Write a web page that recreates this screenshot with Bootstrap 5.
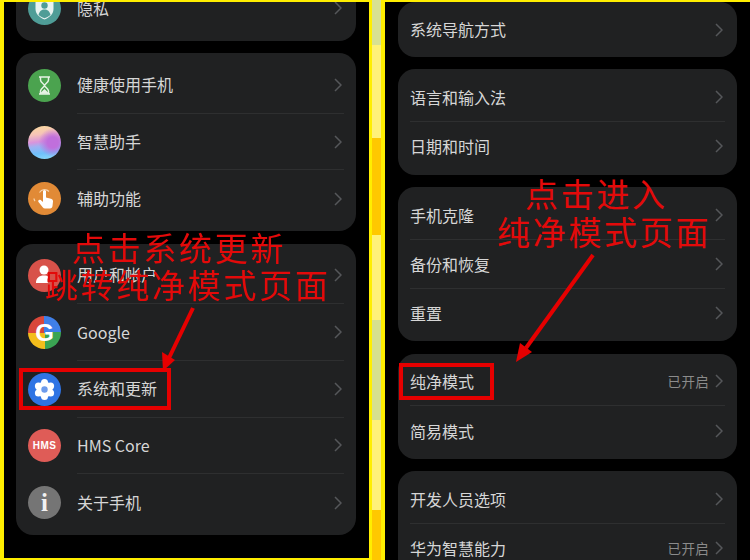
<!DOCTYPE html>
<html lang="zh-CN">
<head>
    <meta charset="UTF-8">
    <title>纯净模式设置步骤</title>
    <link href="https://cdn.jsdelivr.net/npm/bootstrap@5.3.0/dist/css/bootstrap.min.css" rel="stylesheet">
    <style>
        html, body {
            height: 100%;
            margin: 0;
            overflow: hidden;
            background: #ffee00;
        }
        body {
            font-family: "Noto Sans CJK SC", "Noto Sans", sans-serif;
        }
        .shot {
            width: 750px;
            height: 560px;
            padding-top: 2px;
            filter: blur(.5px);
        }
        .phone-pane {
            background: #000;
            overflow: hidden;
            width: 365px;
            flex: none;
        }
        .pane-left {
            margin-left: 4px;
            height: 556px;
            padding: 0 13px 0 12px;
        }
        .pane-right {
            height: 558px;
            padding: 0 13px;
        }
        .stack-left {
            margin-top: -26px;
        }
        .group-stack {
            gap: 12.4px;
        }
        .gutter {
            width: 16px;
            flex: none;
            margin-top: -2px;
            padding: 0 4px 0 3px;
        }
        .gutter-fill {
            height: 100%;
            background: linear-gradient(to bottom,
                #d8e192 0 45px, #fff178 45px 138px,
                #ffc800 138px 235px, #fff178 235px 320px,
                #d6e08e 320px 420px, #fff178 420px 510px,
                #ffc800 510px);
        }
        .settings-group {
            background: #202122;
            border-radius: 17px;
            padding: 4px 0;
        }
        .left-row {
            height: 56.7px;
            padding-left: 12px;
            gap: 16px;
        }
        .right-row {
            height: 48.7px;
            padding-left: 12px;
        }
        .right-row.short-row {
            height: 47px;
        }
        .row-body {
            height: 100%;
            margin-right: 12px;
            padding-right: 2px;
            color: #d6d6d6;
            font-size: 16px;
            line-height: 1;
            border-bottom: 1px solid #2e2f30;
        }
        .last-row .row-body {
            border-bottom: 0;
        }
        .left-row .row-label, .short-row .row-label {
            padding-bottom: 2px;
        }
        .left-row .row-label.plain-label {
            padding-bottom: 0;
        }
        .row-state {
            color: #8b8b8b;
            font-size: 13.5px;
            letter-spacing: .3px;
            margin-right: 6px;
        }
        .row-chevron {
            width: 8px;
            height: 14px;
            flex: none;
        }
        .app-icon {
            width: 33px;
            height: 33px;
            flex: none;
            overflow: hidden;
        }
        .icon-privacy { background: #4f9d97; }
        .icon-health { background: #4ba34f; }
        .icon-assistant {
            background:
                radial-gradient(circle at 75% 50%, #c06fdc 0 18%, transparent 48%),
                linear-gradient(172deg, #fbdc9c 0%, #f5c3b8 26%, #d994dc 46%, #9fb2f2 58%, #6fc0fb 78%, #8fdcf7 100%);
        }
        .icon-access { background: #e18a36; }
        .icon-user { background: #d8524a; }
        .icon-google {
            background: conic-gradient(#3f7fe8 0 90deg, #3aa453 90deg 180deg, #f3bd1c 180deg 270deg, #d9473a 270deg 360deg);
            color: #fff;
            font: 700 24px/1 "Liberation Sans", sans-serif;
        }
        .icon-system { background: #2f74e4; }
        .icon-hms {
            background: #df5c57;
            color: #fff;
            font: 700 10px/1 "Liberation Sans", sans-serif;
            letter-spacing: .4px;
        }
        .icon-about {
            background: #757575;
            color: #f2f2f2;
            font: 700 25px/1 "Liberation Serif", serif;
        }
        .note-text {
            position: absolute;
            color: #e30a0a;
            font-size: 33px;
            line-height: 1;
            letter-spacing: 2.7px;
            white-space: nowrap;
        }
        .note-a { left: 72px; top: 231px; }
        .note-b { left: 45px; top: 268px; }
        .note-c { left: 525px; top: 177px; }
        .note-d { left: 497px; top: 215px; }
        .red-frame {
            position: absolute;
            border: 4px solid #e60000;
        }
        .frame-left { left: 19px; top: 368px; width: 152px; height: 42px; }
        .frame-right { left: 399px; top: 363px; width: 95px; height: 37px; }
        .note-arrows {
            position: absolute;
            inset: 0;
        }
    </style>
</head>
<body>
    <svg width="0" height="0" class="position-absolute">
        <symbol id="chev" viewBox="0 0 8 14">
            <polyline points="1,1 7,7 1,13" fill="none" stroke="#55575a" stroke-width="1.5"/>
        </symbol>
    </svg>

    <div class="shot position-relative d-flex">
        <!-- left phone -->
        <div class="phone-pane pane-left">
            <div class="stack-left group-stack d-flex flex-column">
                <div class="settings-group">
                    <div class="left-row last-row d-flex align-items-center">
                        <span class="app-icon icon-privacy rounded-circle d-flex align-items-center justify-content-center">
                            <svg width="33" height="33" viewBox="0 0 33 33"><path d="M16.5 6l9 3v8c0 5-4 8.500-9 10.500-5-2-9-5.500-9-10.500V9z" fill="#e9f3f1"/><circle cx="16.500" cy="13.500" r="3.200" fill="#4f9d97"/><path d="M10.500 23c1-4 3-5.500 6-5.500s5 1.500 6 5.500c-2 1.500-4 2.500-6 3.200-2-.7-4-1.700-6-3.200z" fill="#4f9d97"/></svg>
                        </span>
                        <div class="row-body flex-grow-1 d-flex align-items-center"><span class="row-label plain-label flex-grow-1">隐私</span><svg class="row-chevron"><use href="#chev"/></svg></div>
                    </div>
                </div>
                <div class="settings-group">
                    <div class="left-row d-flex align-items-center">
                        <span class="app-icon icon-health rounded-circle d-flex align-items-center justify-content-center">
                            <svg width="33" height="33" viewBox="0 0 33 33" fill="none" stroke="#e8f3e6" stroke-width="1.500"><path d="M11 8h11M11 25h11"/><path d="M12.500 8v3c0 2.500 4 4 4 5.500s-4 3-4 5.500v3M20.500 8v3c0 2.500-4 4-4 5.500s4 3 4 5.500v3"/><path d="M13.500 24l3-3 3 3z" fill="#e8f3e6"/></svg>
                        </span>
                        <div class="row-body flex-grow-1 d-flex align-items-center"><span class="row-label flex-grow-1">健康使用手机</span><svg class="row-chevron"><use href="#chev"/></svg></div>
                    </div>
                    <div class="left-row d-flex align-items-center">
                        <span class="app-icon icon-assistant rounded-circle"></span>
                        <div class="row-body flex-grow-1 d-flex align-items-center"><span class="row-label flex-grow-1">智慧助手</span><svg class="row-chevron"><use href="#chev"/></svg></div>
                    </div>
                    <div class="left-row last-row d-flex align-items-center">
                        <span class="app-icon icon-access rounded-circle d-flex align-items-center justify-content-center">
                            <svg width="33" height="33" viewBox="0 0 33 33"><path d="M15 9.500c0-2 3-2 3 0v6l5 1.200c1.500.4 2 1.300 2 2.800l-.5 4.500c-.2 1.500-1 2.500-2.500 2.500h-5c-1 0-1.700-.4-2.300-1.200l-4.200-5.300c-1-1.500.8-3 2.200-1.900l2.300 1.900z" fill="#fff"/><path d="M11.500 10.500a6 6 0 0 1 9.500-1M7 19c-.6-.7-1-1.500-1-2.500" fill="none" stroke="#f7d5ae" stroke-width="1.200"/></svg>
                        </span>
                        <div class="row-body flex-grow-1 d-flex align-items-center"><span class="row-label flex-grow-1">辅助功能</span><svg class="row-chevron"><use href="#chev"/></svg></div>
                    </div>
                </div>
                <div class="settings-group">
                    <div class="left-row d-flex align-items-center">
                        <span class="app-icon icon-user rounded-circle d-flex align-items-center justify-content-center">
                            <svg width="33" height="33" viewBox="0 0 33 33" fill="#fff"><circle cx="16" cy="11" r="4.500"/><path d="M8 24c0-5 3-7.500 8-7.500 2 0 3.500.4 4.800 1.300-1.500 1.500-2 4-.8 6.200z"/></svg>
                        </span>
                        <div class="row-body flex-grow-1 d-flex align-items-center"><span class="row-label flex-grow-1">用户和帐户</span><svg class="row-chevron"><use href="#chev"/></svg></div>
                    </div>
                    <div class="left-row d-flex align-items-center">
                        <span class="app-icon icon-google rounded-circle d-flex align-items-center justify-content-center">G</span>
                        <div class="row-body flex-grow-1 d-flex align-items-center"><span class="row-label plain-label flex-grow-1">Google</span><svg class="row-chevron"><use href="#chev"/></svg></div>
                    </div>
                    <div class="left-row d-flex align-items-center">
                        <span class="app-icon icon-system rounded-circle d-flex align-items-center justify-content-center">
                            <svg width="33" height="33" viewBox="0 0 33 33"><g fill="#fff"><circle cx="16.500" cy="16.500" r="8"/><circle cx="16.500" cy="9.500" r="3.500"/><circle cx="16.500" cy="23.500" r="3.500"/><circle cx="10.400" cy="13" r="3.500"/><circle cx="22.600" cy="13" r="3.500"/><circle cx="10.400" cy="20" r="3.500"/><circle cx="22.600" cy="20" r="3.500"/></g><circle cx="16.500" cy="16.500" r="3.200" fill="#6d9bec"/></svg>
                        </span>
                        <div class="row-body flex-grow-1 d-flex align-items-center"><span class="row-label flex-grow-1">系统和更新</span><svg class="row-chevron"><use href="#chev"/></svg></div>
                    </div>
                    <div class="left-row d-flex align-items-center">
                        <span class="app-icon icon-hms rounded-circle d-flex align-items-center justify-content-center">HMS</span>
                        <div class="row-body flex-grow-1 d-flex align-items-center"><span class="row-label plain-label flex-grow-1">HMS Core</span><svg class="row-chevron"><use href="#chev"/></svg></div>
                    </div>
                    <div class="left-row last-row d-flex align-items-center">
                        <span class="app-icon icon-about rounded-circle d-flex align-items-center justify-content-center">i</span>
                        <div class="row-body flex-grow-1 d-flex align-items-center"><span class="row-label flex-grow-1">关于手机</span><svg class="row-chevron"><use href="#chev"/></svg></div>
                    </div>
                </div>
            </div>
        </div>

        <div class="gutter"><div class="gutter-fill"></div></div>

        <!-- right phone -->
        <div class="phone-pane pane-right">
            <div class="group-stack d-flex flex-column">
                <div class="settings-group">
                    <div class="right-row short-row last-row d-flex align-items-center">
                        <div class="row-body flex-grow-1 d-flex align-items-center"><span class="row-label flex-grow-1">系统导航方式</span><svg class="row-chevron"><use href="#chev"/></svg></div>
                    </div>
                </div>
                <div class="settings-group">
                    <div class="right-row d-flex align-items-center">
                        <div class="row-body flex-grow-1 d-flex align-items-center"><span class="row-label flex-grow-1">语言和输入法</span><svg class="row-chevron"><use href="#chev"/></svg></div>
                    </div>
                    <div class="right-row last-row d-flex align-items-center">
                        <div class="row-body flex-grow-1 d-flex align-items-center"><span class="row-label flex-grow-1">日期和时间</span><svg class="row-chevron"><use href="#chev"/></svg></div>
                    </div>
                </div>
                <div class="settings-group">
                    <div class="right-row d-flex align-items-center">
                        <div class="row-body flex-grow-1 d-flex align-items-center"><span class="row-label flex-grow-1">手机克隆</span><svg class="row-chevron"><use href="#chev"/></svg></div>
                    </div>
                    <div class="right-row d-flex align-items-center">
                        <div class="row-body flex-grow-1 d-flex align-items-center"><span class="row-label flex-grow-1">备份和恢复</span><svg class="row-chevron"><use href="#chev"/></svg></div>
                    </div>
                    <div class="right-row last-row d-flex align-items-center">
                        <div class="row-body flex-grow-1 d-flex align-items-center"><span class="row-label flex-grow-1">重置</span><svg class="row-chevron"><use href="#chev"/></svg></div>
                    </div>
                </div>
                <div class="settings-group">
                    <div class="right-row d-flex align-items-center">
                        <div class="row-body flex-grow-1 d-flex align-items-center"><span class="row-label flex-grow-1">纯净模式</span><span class="row-state">已开启</span><svg class="row-chevron"><use href="#chev"/></svg></div>
                    </div>
                    <div class="right-row last-row d-flex align-items-center">
                        <div class="row-body flex-grow-1 d-flex align-items-center"><span class="row-label flex-grow-1">简易模式</span><svg class="row-chevron"><use href="#chev"/></svg></div>
                    </div>
                </div>
                <div class="settings-group">
                    <div class="right-row d-flex align-items-center">
                        <div class="row-body flex-grow-1 d-flex align-items-center"><span class="row-label flex-grow-1">开发人员选项</span><svg class="row-chevron"><use href="#chev"/></svg></div>
                    </div>
                    <div class="right-row last-row d-flex align-items-center">
                        <div class="row-body flex-grow-1 d-flex align-items-center"><span class="row-label flex-grow-1">华为智慧能力</span><span class="row-state">已开启</span><svg class="row-chevron"><use href="#chev"/></svg></div>
                    </div>
                </div>
            </div>
        </div>

        <!-- red annotations lying over the screenshots -->
        <svg class="note-arrows" width="750" height="560" viewBox="0 0 750 560">
            <path d="M193 308L169 358" stroke="#e60000" stroke-width="4" fill="none"/>
            <path d="M163 371L162 352 175 360z" fill="#e60000"/>
            <path d="M593 255L526 348" stroke="#e60000" stroke-width="4" fill="none"/>
            <path d="M516 362L520 343 532 352z" fill="#e60000"/>
        </svg>
        <div class="red-frame frame-left"></div>
        <div class="red-frame frame-right"></div>
        <div class="note-text note-a">点击系统更新</div>
        <div class="note-text note-b">跳转纯净模式页面</div>
        <div class="note-text note-c">点击进入</div>
        <div class="note-text note-d">纯净模式页面</div>
    </div>

    <script src="https://cdn.jsdelivr.net/npm/bootstrap@5.3.0/dist/js/bootstrap.bundle.min.js"></script>
</body>
</html>
